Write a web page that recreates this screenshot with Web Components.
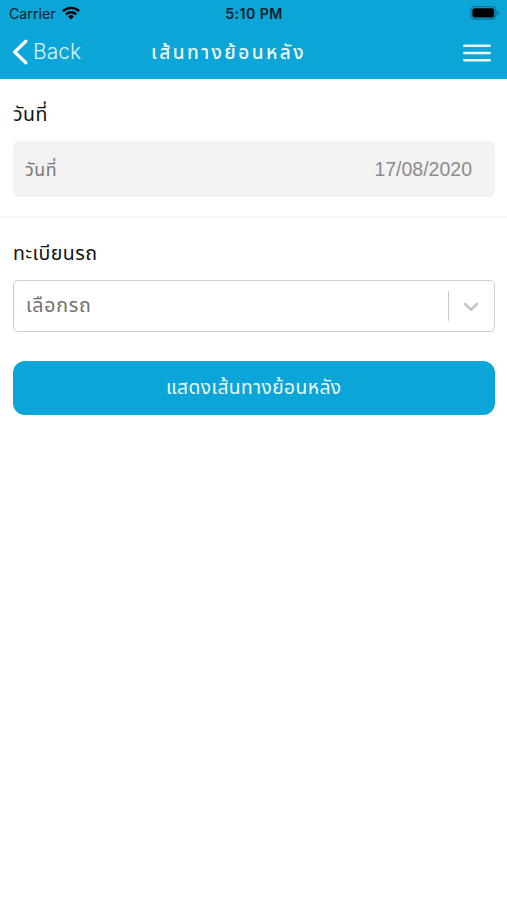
<!DOCTYPE html>
<html lang="th">
<head>
<meta charset="utf-8">
<meta name="viewport" content="width=device-width, initial-scale=1">
<title>เส้นทางย้อนหลัง</title>
<style>
  html, body { margin: 0; height: 100%; background: #fff; }
  body {
    --brand: #0ba5d8;
    --thai: "Noto Sans Thai", "Noto Sans", "Open Sans", sans-serif;
    font-family: var(--thai);
  }
</style>
</head>
<body>

<history-page>
  <status-bar slot="header" carrier="Carrier" time="5:10 PM"></status-bar>
  <nav-bar slot="header" back="Back">เส้นทางย้อนหลัง</nav-bar>

  <form-section label="วันที่" divided>
    <date-field label="วันที่" value="17/08/2020"></date-field>
  </form-section>
  <form-section label="ทะเบียนรถ">
    <select-field placeholder="เลือกรถ"></select-field>
  </form-section>
  <primary-button>แสดงเส้นทางย้อนหลัง</primary-button>
</history-page>

<script>
/**
 * HistoryPage
 *  - Element: history-page
 */
class HistoryPage extends HTMLElement {

  constructor() {
    super();
    const shadowRoot = this.attachShadow({mode: 'open'});
    shadowRoot.innerHTML = `
      <style>
        :host { display: flex; flex-direction: column; min-height: 100%; }
        header { background: var(--brand); height: 79px; }
        main { display: flex; flex-direction: column; }
      </style>
      <header><slot name="header"></slot></header>
      <main><slot></slot></main>
    `;
  }

}

/**
 * StatusBar
 *  - Element: status-bar
 *  - Attributes: carrier, time
 */
class StatusBar extends HTMLElement {

  connectedCallback() {
    const shadowRoot = this.attachShadow({mode: 'open'});
    shadowRoot.innerHTML = `
      <style>
        :host {
          display: grid;
          grid-template-columns: 1fr auto 1fr;
          align-items: center;
          height: 27px;
          padding: 0 8px 0 9px;
          color: #06202b;
          font: 14.2px/27px Inter, sans-serif;
        }
        .carrier { display: flex; align-items: center; gap: 6px; }
        .time { font-weight: 600; font-size: 14.2px; letter-spacing: 0.4px; }
        .battery { justify-self: end; }
        svg { display: block; margin-top: -1px; }
      </style>
      <div class="carrier">
        <span>${this.getAttribute('carrier')}</span>
        <svg width="18" height="14" viewBox="0 0 18 14">
          <g fill="none" stroke="#000" stroke-width="2.4">
            <path d="M0.9 5.2a11.6 11.6 0 0 1 16.2 0"/>
            <path d="M3.9 8.4a7.3 7.3 0 0 1 10.2 0"/>
          </g>
          <path d="M9 13.4l-2.9-2.9a4.1 4.1 0 0 1 5.8 0z"/>
        </svg>
      </div>
      <span class="time">${this.getAttribute('time')}</span>
      <svg class="battery" width="29" height="14" viewBox="0 0 29 14">
        <rect x="0.8" y="0.7" width="25" height="12.4" rx="3.8" fill="none" stroke="#077096" stroke-width="1.3"/>
        <rect x="2.4" y="2.3" width="21.8" height="9.2" rx="2"/>
        <path d="M27.200 4.600c1.200.4 1.800 1.300 1.800 2.400s-.6 2-1.800 2.400z" fill="#077096"/>
      </svg>
    `;
  }

}

/**
 * NavBar
 *  - Element: nav-bar
 *  - Attributes: back
 */
class NavBar extends HTMLElement {

  connectedCallback() {
    const shadowRoot = this.attachShadow({mode: 'open'});
    shadowRoot.innerHTML = `
      <style>
        :host {
          display: grid;
          grid-template-columns: 151px 1fr auto;
          align-items: center;
          height: 52px;
          color: #fff;
        }
        .back { display: flex; align-items: center; gap: 5px; margin-top: -2px; padding-left: 12px; font: 300 21px/26px "Inter", sans-serif; color: #d8f3fc; }
        .title { white-space: nowrap; font-size: 19px; font-weight: 500; letter-spacing: 2.45px; color: #effaff; }
        .menu { margin-right: 16px; }
        svg { display: block; }
      </style>
      <div class="back">
        <svg width="16" height="26" viewBox="0 0 16 26">
          <path d="M13.8 2.200L2.700 13l11.100 10.800" fill="none" stroke="#fff" stroke-width="3.300" stroke-linecap="round" stroke-linejoin="round"/>
        </svg>
        <span>${this.getAttribute('back')}</span>
      </div>
      <div class="title"><slot></slot></div>
      <svg class="menu" width="28" height="20" viewBox="0 0 28 20">
        <path d="M1.300 2.800h25.400M1.300 10h25.400M1.300 17.200h25.400" stroke="#e9f9ff" stroke-width="2.600" stroke-linecap="round"/>
      </svg>
    `;
  }

}

/**
 * FormSection
 *  - Element: form-section
 *  - Attributes: label, divided
 */
class FormSection extends HTMLElement {

  connectedCallback() {
    const shadowRoot = this.attachShadow({mode: 'open'});
    shadowRoot.innerHTML = `
      <style>
        :host { display: block; box-sizing: border-box; height: 138px; padding: 21px 12.5px 0 13px; }
        :host([divided]) { border-bottom: 2px solid #f6f6f6; height: 139px; }
        .label { height: 41px; font-size: 19.5px; line-height: 30px; letter-spacing: 0.5px; color: #111; white-space: nowrap; }
      </style>
      <div class="label"><span>${this.getAttribute('label')}</span></div>
      <slot></slot>
    `;
  }

}

/**
 * DateField
 *  - Element: date-field
 *  - Attributes: label, value
 */
class DateField extends HTMLElement {

  connectedCallback() {
    const shadowRoot = this.attachShadow({mode: 'open'});
    shadowRoot.innerHTML = `
      <style>
        :host {
          display: flex;
          align-items: center;
          justify-content: space-between;
          box-sizing: border-box;
          height: 56px;
          padding: 0 22.5px 0 12px;
          border-radius: 6px;
          background: #f2f2f2;
          color: #777;
          font-size: 17.8px;
        }
        .label { padding-top: 2px; letter-spacing: 0.5px; }
        .value { font: 19.5px "Liberation Sans", sans-serif; color: #8c8c8c; }
      </style>
      <span class="label">${this.getAttribute('label')}</span>
      <span class="value">${this.getAttribute('value')}</span>
    `;
  }

}

/**
 * SelectField
 *  - Element: select-field
 *  - Attributes: placeholder
 */
class SelectField extends HTMLElement {

  connectedCallback() {
    const shadowRoot = this.attachShadow({mode: 'open'});
    shadowRoot.innerHTML = `
      <style>
        :host {
          display: flex;
          align-items: center;
          box-sizing: border-box;
          height: 52px;
          padding-left: 12px;
          border: 1px solid #cdcdcd;
          border-radius: 5px;
          color: #707070;
          font-size: 19.5px;
          letter-spacing: 0.8px;
        }
        .placeholder { flex: 1; }
        .separator { width: 1px; height: 30px; background: #ccc; }
        .indicator { display: grid; place-items: center; width: 45px; padding-top: 2px; }
      </style>
      <span class="placeholder">${this.getAttribute('placeholder')}</span>
      <span class="separator"></span>
      <span class="indicator">
        <svg width="16" height="10" viewBox="0 0 16 10">
          <path d="M2 2l6 5.700L14 2" fill="none" stroke="#c6c6c6" stroke-width="2.600" stroke-linecap="round" stroke-linejoin="round"/>
        </svg>
      </span>
    `;
  }

}

/**
 * PrimaryButton
 *  - Element: primary-button
 */
class PrimaryButton extends HTMLElement {

  constructor() {
    super();
    const shadowRoot = this.attachShadow({mode: 'open'});
    shadowRoot.innerHTML = `
      <style>
        :host { display: block; margin: 5px 12.5px 0 13px; }
        button {
          display: flex;
          align-items: center;
          justify-content: center;
          width: 100%;
          height: 54px;
          padding: 0;
          border: 0;
          border-radius: 12px;
          background: var(--brand);
          color: #e9f9ff;
          font: 19.2px var(--thai);
          letter-spacing: 0.45px;
        }
      </style>
      <button type="button"><slot></slot></button>
    `;
  }

}

customElements.define('history-page', HistoryPage);
customElements.define('status-bar', StatusBar);
customElements.define('nav-bar', NavBar);
customElements.define('form-section', FormSection);
customElements.define('date-field', DateField);
customElements.define('select-field', SelectField);
customElements.define('primary-button', PrimaryButton);
</script>
</body>
</html>
